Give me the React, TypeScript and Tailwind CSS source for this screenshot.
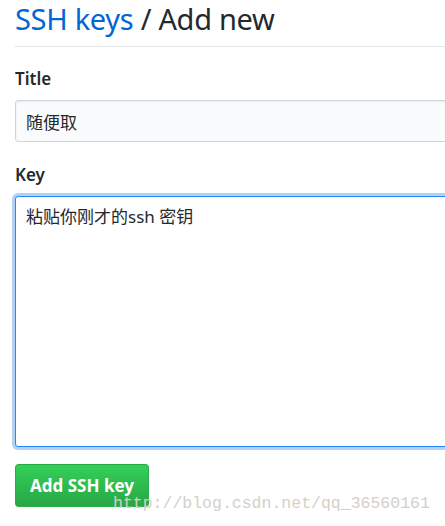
export default function App() {
	return (
		<div className="relative h-[526px] w-[445px] overflow-hidden bg-white font-['Noto_Sans','Noto_Sans_CJK_SC',sans-serif] text-[#24292e]">
			<div className="pl-[15px]">
				<div className="mr-[-20px] border-b border-[#e1e4e8] pb-[8px]">
					<h1 className="w-fit text-[29px] leading-[38px] font-normal tracking-[-0.3px]">
						<span className="text-[#0366d6]">SSH keys</span> / Add new
					</h1>
				</div>

				<div className="mr-[-20px] mt-[20px] flex flex-col">
					<label className="text-[17px] leading-[24px] font-semibold">Title</label>
					<input
						defaultValue="随便取"
						className="mt-[9px] h-[42px] rounded-[3px] border border-[#d1d5da] bg-[#fafbfc] px-[10px] text-[17px] text-[#24292e] shadow-[inset_0_1px_2px_rgba(27,31,35,0.075)] outline-none"
					/>
				</div>

				<div className="mr-[-20px] mt-[21px] flex flex-col">
					<label className="text-[17px] leading-[24px] font-semibold">Key</label>
					<textarea
						defaultValue="粘贴你刚才的ssh 密钥"
						className="mt-[9px] h-[251px] resize-none rounded-[3px] border border-[#2188ff] bg-white px-[10px] py-[7px] text-[17px] text-[#24292e] shadow-[0_0_0_3px_rgba(3,102,214,0.3)] outline-none"
					/>
				</div>

				<button className="mt-[17px] h-[43px] w-[134px] rounded-[4px] border border-[#28a745]/80 bg-gradient-to-b from-[#34d058] to-[#28a745] text-[17px] font-bold text-white">
					Add SSH key
				</button>
			</div>

			<div className="absolute left-[113px] top-[494px] font-['Liberation_Mono',monospace] text-[16.5px] leading-[20px] text-[#d4d0c8]">
				http://blog.csdn.net/qq_36560161
			</div>
		</div>
	);
}
